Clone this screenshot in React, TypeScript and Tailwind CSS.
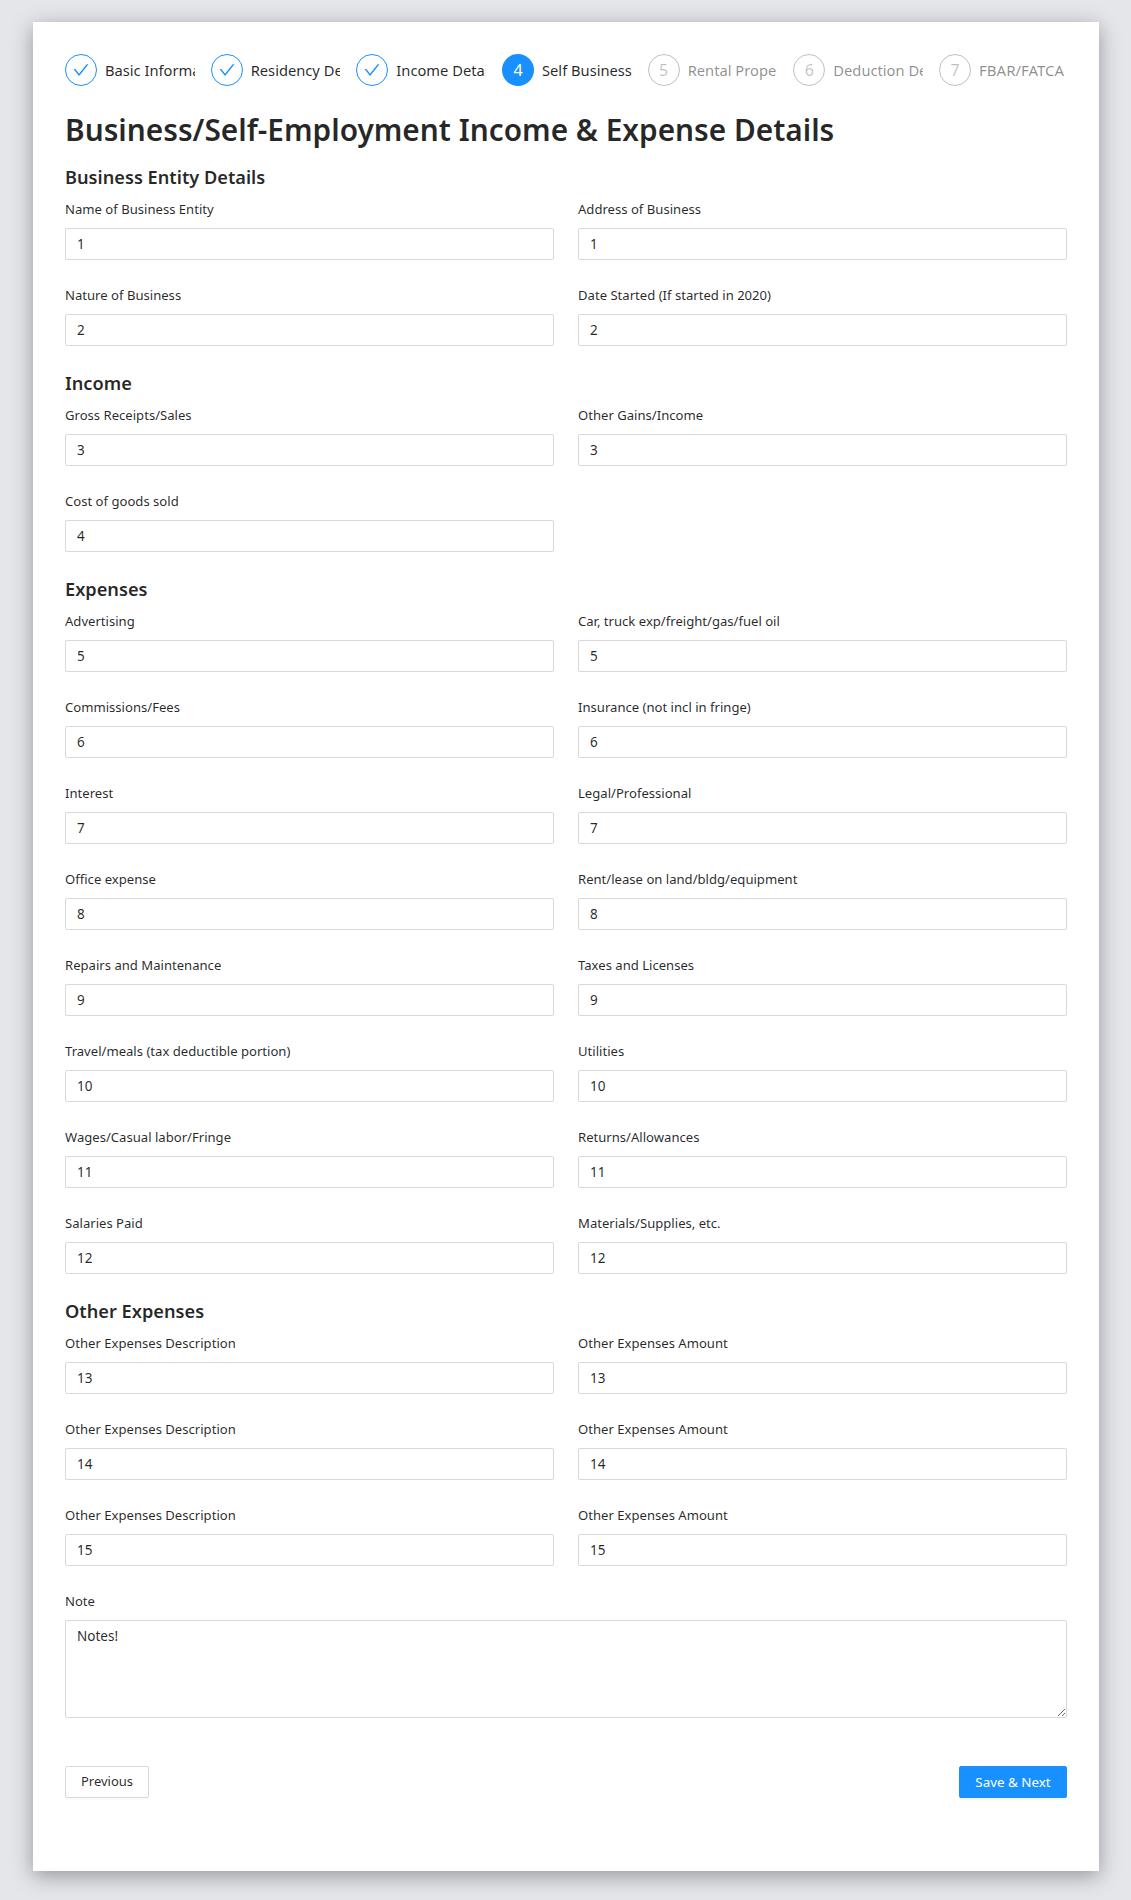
import React from "react";

const steps = [
  { t: "Basic Information", s: "done" },
  { t: "Residency Details", s: "done" },
  { t: "Income Details", s: "done" },
  { t: "Self Business", s: "active", n: 4 },
  { t: "Rental Property", s: "wait", n: 5 },
  { t: "Deduction Details", s: "wait", n: 6 },
  { t: "FBAR/FATCA", s: "wait", n: 7 },
];

function Step({ t, s, n, last }: { t: string; s: string; n?: number; last: boolean }) {
  return (
    <div className={last ? "flex flex-none w-[128px] items-center h-8" : "flex flex-1 min-w-0 items-center h-8 mr-4 overflow-hidden"}>
      <div
        className={
          s === "done"
            ? "flex-none w-8 h-8 rounded-full border border-[#1890ff] flex items-center justify-center text-[#1890ff]"
            : s === "active"
              ? "flex-none w-8 h-8 rounded-full bg-[#1890ff] flex items-center justify-center text-white text-[16px]"
              : "flex-none w-8 h-8 rounded-full border border-[#00000040] flex items-center justify-center text-[#00000040] text-[16px]"
        }
      >
        {s === "done" ? (
          <svg viewBox="64 64 896 896" width="16" height="16" fill="currentColor">
            <path d="M912 190h-69.9c-9.8 0-19.1 4.5-25.1 12.2L404.7 724.5 207 474a32 32 0 0 0-25.1-12.2H112c-6.7 0-10.4 7.7-6.3 12.9l273.9 347c12.8 16.2 37.4 16.2 50.3 0l488.4-618.9c4.1-5.1.4-12.8-6.3-12.8z" />
          </svg>
        ) : (
          n
        )}
      </div>
      <div
        className={
          "ml-2 whitespace-nowrap leading-8 " +
          (last ? "text-[15px] " : "text-[14.7px] overflow-hidden ") +
          (s === "wait" ? "text-[#00000073]" : "text-[#000000d9]")
        }
      >
        {t}
      </div>
    </div>
  );
}

function Field({ label, value }: { label: string; value: string }) {
  return (
    <div className="mb-6">
      <label className="block h-[22px] leading-[22px] text-[13.1px] text-[#000000d9] mb-2">{label}</label>
      <input
        readOnly
        value={value}
        className="block w-full h-8 px-[11px] pb-[1px] border border-[#d9d9d9] rounded-[2px] bg-white text-[13.5px] text-[#000000d9] outline-none"
      />
    </div>
  );
}

function Row({ items }: { items: [string, string][] }) {
  return (
    <div className="grid grid-cols-2 gap-x-6">
      {items.map(([l, v], i) => (
        <Field key={i} label={l} value={v} />
      ))}
    </div>
  );
}

function Heading({ children }: { children: React.ReactNode }) {
  return <h3 className="text-[18.2px] leading-[26px] font-semibold text-[#000000d9] mb-2">{children}</h3>;
}

export default function App() {
  return (
    <div className="min-h-[1900px] bg-[#e4e6ea] pt-[22px] font-['Noto_Sans',sans-serif]">
      <div className="ml-[33px] w-[1066px] h-[1849px] bg-white px-8 pt-8 shadow-[0_5px_20px_rgba(0,0,0,0.35)]">
        <div className="flex">
          {steps.map((s, i) => (
            <Step key={i} t={s.t} s={s.s} n={s.n} last={i === steps.length - 1} />
          ))}
        </div>
        <h1 className="mt-6 mb-[14px] text-[29.8px] leading-10 font-semibold text-[#000000d9]">
          Business/Self-Employment Income &amp; Expense Details
        </h1>
        <Heading>Business Entity Details</Heading>
        <Row items={[["Name of Business Entity", "1"], ["Address of Business", "1"], ["Nature of Business", "2"], ["Date Started (If started in 2020)", "2"]]} />
        <Heading>Income</Heading>
        <Row items={[["Gross Receipts/Sales", "3"], ["Other Gains/Income", "3"], ["Cost of goods sold", "4"]]} />
        <Heading>Expenses</Heading>
        <Row
          items={[
            ["Advertising", "5"],
            ["Car, truck exp/freight/gas/fuel oil", "5"],
            ["Commissions/Fees", "6"],
            ["Insurance (not incl in fringe)", "6"],
            ["Interest", "7"],
            ["Legal/Professional", "7"],
            ["Office expense", "8"],
            ["Rent/lease on land/bldg/equipment", "8"],
            ["Repairs and Maintenance", "9"],
            ["Taxes and Licenses", "9"],
            ["Travel/meals (tax deductible portion)", "10"],
            ["Utilities", "10"],
            ["Wages/Casual labor/Fringe", "11"],
            ["Returns/Allowances", "11"],
            ["Salaries Paid", "12"],
            ["Materials/Supplies, etc.", "12"],
          ]}
        />
        <Heading>Other Expenses</Heading>
        <Row
          items={[
            ["Other Expenses Description", "13"],
            ["Other Expenses Amount", "13"],
            ["Other Expenses Description", "14"],
            ["Other Expenses Amount", "14"],
            ["Other Expenses Description", "15"],
            ["Other Expenses Amount", "15"],
          ]}
        />
        <label className="block h-[22px] leading-[22px] text-[13.1px] text-[#000000d9] mb-2">Note</label>
        <textarea
          readOnly
          value="Notes!"
          className="block w-full h-[98px] px-[11px] py-1 border border-[#d9d9d9] rounded-[2px] bg-white text-[13.5px] leading-[22px] text-[#000000d9] outline-none resize-y"
        />
        <div className="flex justify-between mt-12">
          <button className="h-8 w-[84px] border border-[#d9d9d9] rounded-[2px] bg-white text-[13px] text-[#000000d9] shadow-[0_2px_0_rgba(0,0,0,0.015)]">
            Previous
          </button>
          <button className="h-8 w-[108px] border border-[#1890ff] rounded-[2px] bg-[#1890ff] text-[13.4px] text-white shadow-[0_2px_0_rgba(0,0,0,0.045)]">
            Save &amp; Next
          </button>
        </div>
      </div>
    </div>
  );
}
